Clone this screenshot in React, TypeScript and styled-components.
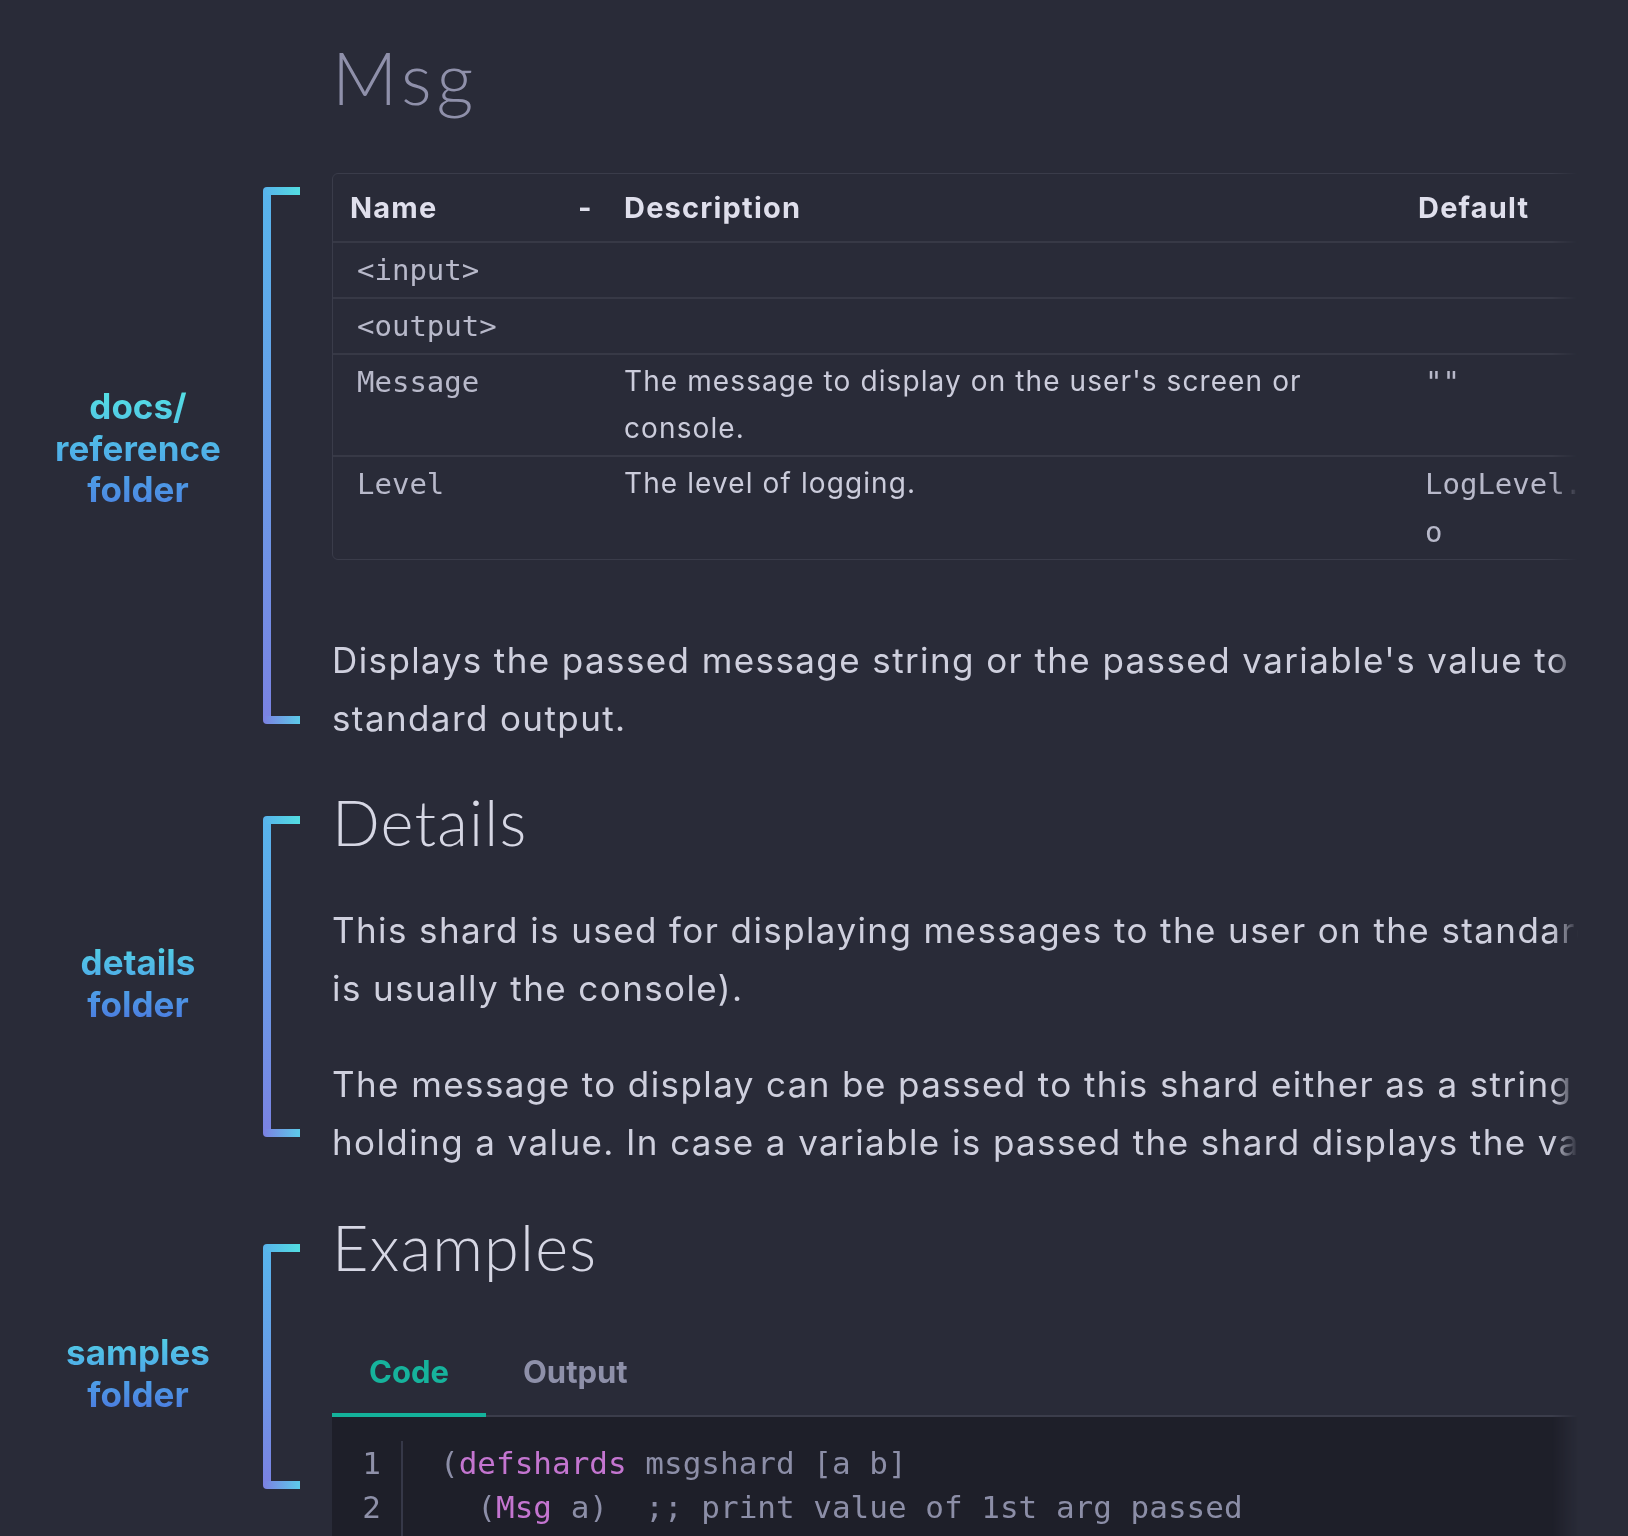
import React from 'react'
import styled, { createGlobalStyle } from 'styled-components'

const GlobalStyle = createGlobalStyle`
  html, body {
    margin: 0;
    padding: 0;
    background: #292b38;
    overflow: hidden;
  }
  body {
    font-family: Inter, "Noto Sans", sans-serif;
    color: #cfd0de;
  }
  * { box-sizing: border-box; }
`

const Page = styled.main`
  height: 1536px;
  overflow: hidden;
  padding-top: 32px;
  display: flex;
  flex-direction: column;
`

const Row = styled.section<{ $gap?: number }>`
  display: flex;
  column-gap: 32px;
  margin-top: ${p => p.$gap ?? 0}px;
  flex: none;
`

const Annotation = styled.div<{ $top: number; $bottom: number }>`
  width: 300px;
  flex: none;
  display: flex;
  align-items: center;
  margin: ${p => p.$top}px 0 ${p => p.$bottom}px;
`

const Spacer = styled.div`
  width: 300px;
  flex: none;
`

// $shift moves the label off the bracket's middle (negative = up)
const FolderLabel = styled.div<{ $shift: number }>`
  width: 263px;
  padding-left: 13px;
  padding-top: ${p => (p.$shift > 0 ? p.$shift * 2 : 0)}px;
  padding-bottom: ${p => (p.$shift < 0 ? -p.$shift * 2 : 0)}px;
  text-align: center;
  font-family: Inter, sans-serif;
  font-weight: 700;
  font-size: 35px;
  line-height: 41.5px;
  background: linear-gradient(180deg, #55e4e3 0%, #4ea9e8 55%, #4b76df 100%);
  -webkit-background-clip: text;
  background-clip: text;
  color: transparent;
`

const Bracket = styled.div`
  align-self: stretch;
  width: 37px;
  display: flex;
  flex-direction: column;
`

const BracketArm = styled.div<{ $end: 'top' | 'bottom' }>`
  height: 8px;
  background: ${p =>
    p.$end === 'top'
      ? 'linear-gradient(90deg, #58b2ec, #52dde1)'
      : 'linear-gradient(90deg, #7c80e2, #5ccbe9)'};
  border-radius: ${p => (p.$end === 'top' ? '4px 0 0 0' : '0 0 0 4px')};
`

const BracketSpine = styled.div`
  flex: 1;
  width: 8px;
  background: linear-gradient(180deg, #58b4ec, #7a83e2);
`

const Content = styled.div`
  width: 1246px;
  flex: none;
  overflow: hidden;
  -webkit-mask-image: linear-gradient(90deg, #000 calc(100% - 26px), transparent);
  mask-image: linear-gradient(90deg, #000 calc(100% - 26px), transparent);
`

const PageTitle = styled.h1`
  margin: 0;
  font-family: Lato, Inter, sans-serif;
  font-weight: 300;
  font-size: 72px;
  line-height: 90px;
  letter-spacing: 5px;
  color: #8f90aa;
`

const SectionTitle = styled.h2`
  margin: 0;
  font-family: Lato, Inter, sans-serif;
  font-weight: 300;
  font-size: 63px;
  line-height: 76px;
  letter-spacing: 1.2px;
  color: #d6d7e4;
`

const Paragraph = styled.p<{ $gap?: number }>`
  margin: ${p => p.$gap ?? 0}px 0 0;
  font-size: 35px;
  line-height: 58px;
  letter-spacing: 1.4px;
  color: #cfd0de;
  width: 1600px;
`

const Line = styled.span`
  display: block;
  white-space: nowrap;
`

const TableFrame = styled.div`
  width: 1330px;
  border: 1px solid #3a3c4a;
  border-radius: 6px;
`

const PropsTable = styled.table`
  width: 100%;
  border-collapse: collapse;
  table-layout: fixed;
`

const HeadCell = styled.th`
  height: 68px;
  padding: 0 17px;
  text-align: left;
  font-weight: 700;
  font-size: 29px;
  letter-spacing: 1.2px;
  color: #dfdfec;
  border-bottom: 2px solid #373946;
`

const BodyRow = styled.tr`
  & + & td { border-top: 2px solid #373946; }
`

const Cell = styled.td<{ $mono?: boolean }>`
  vertical-align: top;
  padding: 3px 17px 3px ${p => (p.$mono ? 24 : 17)}px;
  font-family: ${p => (p.$mono ? '"DejaVu Sans Mono", monospace' : 'Inter, sans-serif')};
  font-size: ${p => (p.$mono ? 29 : 28)}px;
  line-height: ${p => (p.$mono ? 48 : 47)}px;
  letter-spacing: ${p => (p.$mono ? 0 : 1.1)}px;
  color: ${p => (p.$mono ? '#b8b9ca' : '#cbccdb')};
  word-break: ${p => (p.$mono ? 'break-all' : 'normal')};
`

const TabList = styled.div`
  display: flex;
  margin-top: 46px;
  box-shadow: inset 0 -2px 0 #3b3d4b;
`

const Tab = styled.button<{ $active?: boolean }>`
  padding: 21px 37px;
  border: 0;
  border-bottom: 4px solid ${p => (p.$active ? '#14b29b' : 'transparent')};
  background: none;
  font-family: Inter, sans-serif;
  font-weight: 700;
  font-size: 31px;
  line-height: 40px;
  color: ${p => (p.$active ? '#16b39c' : '#8e90a9')};
  cursor: pointer;
`

const CodeBlock = styled.div`
  background: #1e1f29;
  padding: 24px 0;
  display: grid;
  grid-template-columns: 71px 1fr;
  font-family: "DejaVu Sans Mono", monospace;
  font-size: 31px;
  line-height: 44px;
`

const Gutter = styled.div`
  padding-right: 20px;
  text-align: right;
  color: #8f91a9;
  border-right: 2px solid #363848;
`

const CodeLines = styled.pre`
  margin: 0;
  padding-left: 37px;
  font: inherit;
  color: #8c8ea7;
  white-space: pre;
`

const Keyword = styled.span`
  color: #c475d0;
`

const codeLines: React.ReactNode[] = [
  <>(<Keyword>defshards</Keyword> msgshard [a b]</>,
  <>  (<Keyword>Msg</Keyword> a)  ;; print value of 1st arg passed</>,
  <>  (<Keyword>Msg</Keyword> b)) ;; print value of 2nd arg passed</>,
]

function FolderNote({ lines, top, bottom, shift }: { lines: string[]; top: number; bottom: number; shift: number }) {
  return (
    <Annotation $top={top} $bottom={bottom}>
      <FolderLabel $shift={shift}>
        {lines.map((l, i) => (
          <div key={i}>{l}</div>
        ))}
      </FolderLabel>
      <Bracket>
        <BracketArm $end="top" />
        <BracketSpine />
        <BracketArm $end="bottom" />
      </Bracket>
    </Annotation>
  )
}

export default function App() {
  return (
    <>
      <GlobalStyle />
      <Page>
        <Row>
          <Spacer />
          <Content>
            <PageTitle>Msg</PageTitle>
          </Content>
        </Row>

        <Row $gap={51}>
          <FolderNote lines={['docs/', 'reference', 'folder']} top={14} bottom={23} shift={-7} />
          <Content>
            <TableFrame>
              <PropsTable>
                <colgroup>
                  <col style={{ width: 228 }} />
                  <col style={{ width: 46 }} />
                  <col style={{ width: 794 }} />
                  <col style={{ width: 260 }} />
                </colgroup>
                <thead>
                  <tr>
                    <HeadCell>Name</HeadCell>
                    <HeadCell>-</HeadCell>
                    <HeadCell>Description</HeadCell>
                    <HeadCell>Default</HeadCell>
                  </tr>
                </thead>
                <tbody>
                  <BodyRow>
                    <Cell $mono>{'<input>'}</Cell>
                    <Cell />
                    <Cell />
                    <Cell $mono />
                  </BodyRow>
                  <BodyRow>
                    <Cell $mono>{'<output>'}</Cell>
                    <Cell />
                    <Cell />
                    <Cell $mono />
                  </BodyRow>
                  <BodyRow>
                    <Cell $mono>Message</Cell>
                    <Cell />
                    <Cell>The message to display on the user's screen or console.</Cell>
                    <Cell $mono>""</Cell>
                  </BodyRow>
                  <BodyRow>
                    <Cell $mono>Level</Cell>
                    <Cell />
                    <Cell>The level of logging.</Cell>
                    <Cell $mono>LogLevel.Info</Cell>
                  </BodyRow>
                </tbody>
              </PropsTable>
            </TableFrame>
            <Paragraph $gap={71}>
              <Line>Displays the passed message string or the passed variable's value to</Line>
              <Line>standard output.</Line>
            </Paragraph>
          </Content>
        </Row>

        <Row $gap={37}>
          <FolderNote lines={['details', 'folder']} top={32} bottom={34} shift={7} />
          <Content>
            <SectionTitle>Details</SectionTitle>
            <Paragraph $gap={41}>
              <Line>This shard is used for displaying messages to the user on the standard output (which</Line>
              <Line>is usually the console).</Line>
            </Paragraph>
            <Paragraph $gap={38}>
              <Line>The message to display can be passed to this shard either as a string or as a variable</Line>
              <Line>holding a value. In case a variable is passed the shard displays the value of the variable.</Line>
            </Paragraph>
          </Content>
        </Row>

        <Row $gap={38}>
          <FolderNote lines={['samples', 'folder']} top={35} bottom={108} shift={7} />
          <Content>
            <SectionTitle>Examples</SectionTitle>
            <TabList>
              <Tab $active>Code</Tab>
              <Tab>Output</Tab>
            </TabList>
            <CodeBlock>
              <Gutter>
                {codeLines.map((_, i) => (
                  <div key={i}>{i + 1}</div>
                ))}
              </Gutter>
              <CodeLines>
                {codeLines.map((l, i) => (
                  <div key={i}>{l}</div>
                ))}
              </CodeLines>
            </CodeBlock>
          </Content>
        </Row>
      </Page>
    </>
  )
}
